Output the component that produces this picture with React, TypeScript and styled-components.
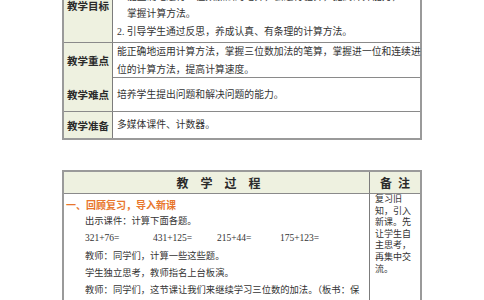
import React from "react";
import styled, { createGlobalStyle } from "styled-components";

const Global = createGlobalStyle`
  html, body {
    margin: 0;
    padding: 0;
    background: #ffffff;
    overflow: hidden;
  }
  body {
    font-family: "Liberation Serif", "Noto Sans CJK SC", serif;
    color: #222;
  }
`;

const Page = styled.div`
  width: 484px;
  height: 300px;
  overflow: hidden;
`;

const Sheet = styled.div`
  margin-top: -34px;
  margin-left: 62px;
  width: 360px;
  display: flex;
  flex-direction: column;
  gap: 30px;
`;

const Table = styled.div`
  border: 2px solid #9a9a9a;
  box-sizing: border-box;
  display: flex;
  flex-direction: column;
`;

const Row = styled.div<{ $h: number; $last?: boolean }>`
  display: grid;
  grid-template-columns: 49px 1fr;
  height: ${(p) => p.$h}px;
  box-sizing: border-box;
  border-bottom: ${(p) => (p.$last ? "none" : "1px solid #8a8a8a")};
`;

const Label = styled.div`
  background: #eef1e0;
  border-right: 1px solid #7c7c7c;
  display: flex;
  align-items: center;
  justify-content: center;
  font-family: "Noto Sans CJK SC", sans-serif;
  font-weight: 700;
  font-size: 10.5px;
  color: #2a2a2a;
`;

const Content = styled.div`
  display: flex;
  flex-direction: column;
  justify-content: center;
  padding-left: 4px;
  font-size: 9.8px;
  line-height: 17.5px;
  color: #333;
`;

const Line = styled.div<{ $indent?: number }>`
  white-space: nowrap;
  padding-left: ${(p) => p.$indent ?? 0}px;
`;

const ProcRow = styled.div`
  display: grid;
  grid-template-columns: 306px 1fr;
`;

const HeadCell = styled.div<{ $spacing: number; $main?: boolean }>`
  background: #eef1e0;
  height: 21px;
  border-bottom: 1px solid #8a8a8a;
  border-right: ${(p) => (p.$main ? "1px solid #7c7c7c" : "none")};
  display: flex;
  align-items: center;
  justify-content: center;
  padding-left: ${(p) => p.$spacing + (p.$main ? 4 : 0)}px;
  font-family: "Noto Sans CJK SC", sans-serif;
  font-weight: 700;
  font-size: 12px;
  letter-spacing: ${(p) => p.$spacing}px;
  color: #2a2a2a;
`;

const MainCell = styled.div`
  border-right: 1px solid #7c7c7c;
  padding: 2px 4px 0 2px;
  height: 120px;
  font-size: 9.3px;
  line-height: 17.2px;
  color: #333;
`;

const SectionTitle = styled.div`
  font-family: "Noto Sans CJK SC", sans-serif;
  font-weight: 700;
  font-size: 10px;
  color: #e8762c;
`;

const Para = styled.div`
  text-indent: 19px;
`;

const Sums = styled.div`
  display: grid;
  grid-template-columns: 68px 64px 63px auto;
  padding-left: 19px;
  font-size: 9.5px;
`;

const Note = styled.div`
  padding: 0 0 0 5px;
  font-size: 9px;
  line-height: 11.6px;
  color: #333;
`;

const goals = [
  { text: "1. 使学生经历探索三位数加法计算方法的过程，理解算理，", indent: 0 },
  { text: "能正确地进行三位数加法的笔算，会进行验算，提高计算能力，", indent: 10 },
  { text: "掌握计算方法。", indent: 10 },
  { text: "2. 引导学生通过反思，养成认真、有条理的计算方法。", indent: 0 },
];

const App: React.FC = () => {
  return (
    <>
      <Global />
      <Page>
        <Sheet>
          <Table>
            <Row $h={75}>
              <Label>教学目标</Label>
              <Content>
                {goals.map((g) => (
                  <Line key={g.text} $indent={g.indent}>
                    {g.text}
                  </Line>
                ))}
              </Content>
            </Row>
            <Row $h={35}>
              <Label>教学重点</Label>
              <Content>
                <Line>能正确地运用计算方法，掌握三位数加法的笔算，掌握进一位和连续进</Line>
                <Line>位的计算方法，提高计算速度。</Line>
              </Content>
            </Row>
            <Row $h={34}>
              <Label>教学难点</Label>
              <Content>
                <Line>培养学生提出问题和解决问题的能力。</Line>
              </Content>
            </Row>
            <Row $h={26} $last>
              <Label>教学准备</Label>
              <Content>
                <Line>多媒体课件、计数器。</Line>
              </Content>
            </Row>
          </Table>

          <Table>
            <ProcRow>
              <HeadCell $main $spacing={12}>教学过程</HeadCell>
              <HeadCell $spacing={6}>备注</HeadCell>
            </ProcRow>
            <ProcRow>
              <MainCell>
                <SectionTitle>一、回顾复习，导入新课</SectionTitle>
                <Para>出示课件：计算下面各题。</Para>
                <Sums>
                  <span>321+76=</span>
                  <span>431+125=</span>
                  <span>215+44=</span>
                  <span>175+123=</span>
                </Sums>
                <Para>教师：同学们，计算一些这些题。</Para>
                <Para>学生独立思考，教师指名上台板演。</Para>
                <Para>
                  教师：同学们，这节课让我们来继续学习三位数的加法。（板书：保护野生动物）
                </Para>
              </MainCell>
              <Note>
                复习旧<br />
                知，引入<br />
                新课。先<br />
                让学生自<br />
                主思考，<br />
                再集中交<br />
                流。
              </Note>
            </ProcRow>
          </Table>
        </Sheet>
      </Page>
    </>
  );
};

export default App;
